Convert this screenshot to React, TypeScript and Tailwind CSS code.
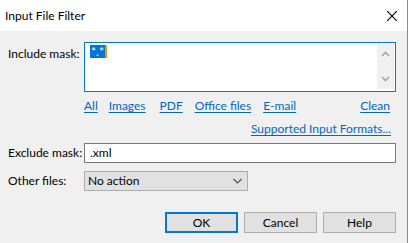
import React from "react";

function Chevron({ dir, className }: { dir: "up" | "down"; className?: string }) {
  return (
    <svg width="9" height="6" viewBox="0 0 9 6" className={className}>
      {dir === "up" ? (
        <path d="M1 5 L4.5 1.5 L8 5" fill="none" stroke="#a6a6a6" strokeWidth="1.6" />
      ) : (
        <path d="M1 1 L4.5 4.5 L8 1" fill="none" stroke="#a6a6a6" strokeWidth="1.6" />
      )}
    </svg>
  );
}

function Link({ children }: { children: React.ReactNode }) {
  return <span className="text-[#0066cc] underline underline-offset-[2px] cursor-pointer whitespace-nowrap">{children}</span>;
}

export default function App() {
  return (
    <div
      className="w-[409px] h-[243px] flex text-[12px] text-black leading-none overflow-hidden whitespace-nowrap"
      style={{ fontFamily: 'Lato, "Noto Sans", sans-serif' }}
    >
      <div className="w-[407px] h-full flex flex-col bg-[#f0f0f0]">
        {/* Title bar */}
        <div className="h-[31px] bg-white flex items-center justify-between pl-[5px] pr-[10px] shrink-0">
          <span className="text-[12px] pt-[1px]">Input File Filter</span>
          <svg width="10" height="10" viewBox="0 0 10 10">
            <path d="M0 0 L10 10 M10 0 L0 10" stroke="#000" strokeWidth="1.1" />
          </svg>
        </div>

        {/* Body */}
        <div className="flex flex-col pl-[8px] pr-[11px] pt-[11px]">
          {/* Include mask */}
          <div className="flex">
            <div className="w-[76px] pt-[6px]">Include mask:</div>
            <div className="flex-1 h-[50px] border border-[#0078d7] bg-white flex justify-between">
              <div className="pl-[5px] pt-[2px]">
                <span className="inline-flex items-center h-[13px] bg-[#0078d7] text-white pl-[1px] pr-[1px] border-r-2 border-[#ff8c00]">
                  *.*
                </span>
              </div>
              <div className="w-[17px] mr-[1px] bg-[#f0f0f0] flex flex-col items-center justify-between pt-[8px] pb-[7px] mb-[2px]">
                <Chevron dir="up" />
                <Chevron dir="down" />
              </div>
            </div>
          </div>

          {/* Quick links */}
          <div className="flex pl-[76px] mt-[7px] h-[14px] items-center">
            <div className="flex-1 flex items-center pr-[6px]">
              <Link>All</Link>
              <span className="ml-[11px]"><Link>Images</Link></span>
              <span className="ml-[14px]"><Link>PDF</Link></span>
              <span className="ml-[12px]"><Link>Office files</Link></span>
              <span className="ml-[12px]"><Link>E-mail</Link></span>
              <span className="ml-auto"><Link>Clean</Link></span>
            </div>
          </div>

          <div className="flex justify-end pr-[5px] mt-[9px] h-[14px] items-center">
            <Link>Supported Input Formats...</Link>
          </div>

          {/* Exclude mask */}
          <div className="flex items-center mt-[7px]">
            <div className="w-[76px]">Exclude mask:</div>
            <div className="flex-1 h-[20px] border border-[#7a7a7a] bg-white flex items-center pl-[5px]">
              .xml
            </div>
          </div>

          {/* Other files */}
          <div className="flex items-center mt-[8px]">
            <div className="w-[76px]">Other files:</div>
            <div className="w-[164px] h-[20px] border border-[#adadad] bg-[#e1e1e1] flex items-center justify-between pl-[3px] pr-[5px]">
              <span>No action</span>
              <svg width="9" height="6" viewBox="0 0 9 6">
                <path d="M0.5 1 L4.5 5 L8.5 1" fill="none" stroke="#505050" strokeWidth="1.2" />
              </svg>
            </div>
          </div>

          {/* Buttons */}
          <div className="flex justify-end mt-[21px] gap-[6px]">
            <div className="w-[73px] h-[21px] border-2 border-[#0078d7] bg-[#e1e1e1] flex items-center justify-center">
              OK
            </div>
            <div className="w-[73px] h-[21px] border border-[#adadad] bg-[#e1e1e1] flex items-center justify-center">
              Cancel
            </div>
            <div className="w-[73px] h-[21px] border border-[#adadad] bg-[#e1e1e1] flex items-center justify-center">
              Help
            </div>
          </div>
        </div>
      </div>
      <div className="w-[1px] h-full bg-[#8a8a8a]" />
      <div className="w-[1px] h-full bg-white" />
    </div>
  );
}
